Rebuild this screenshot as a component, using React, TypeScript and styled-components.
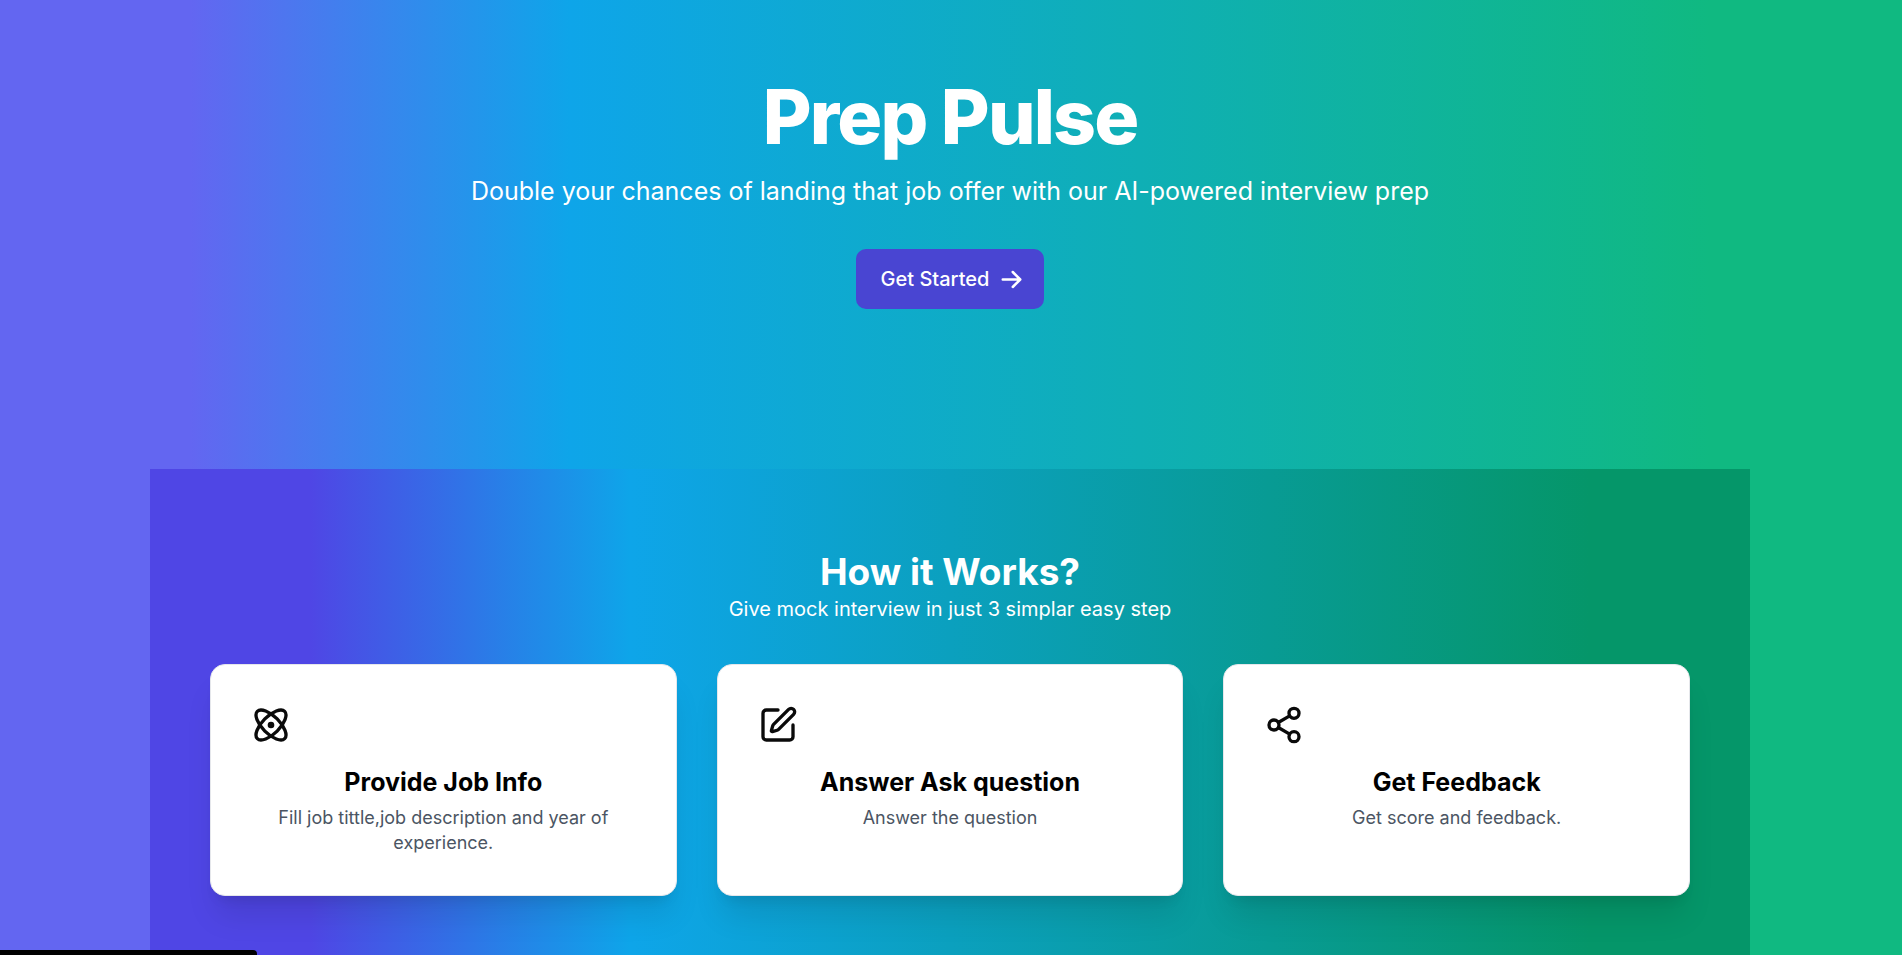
import React from "react";
import styled, { createGlobalStyle } from "styled-components";
import { Atom, Edit, Share2 } from "lucide-react";

const GlobalStyle = createGlobalStyle`
  *, *::before, *::after { box-sizing: border-box; }
  html, body { margin: 0; height: 100%; }
  body {
    font-family: Inter, "Liberation Sans", sans-serif;
    overflow: hidden;
    color: #000;
    border-right: 2px solid #10b981;
  }
  h1, h2, h3, p { margin: 0; }
`;

const Page = styled.div`
  min-height: 100vh;
  background: linear-gradient(to right, #6366f1 10%, #0ea5e9 30%, #10b981 90%);
`;

const Hero = styled.section`
  display: flex;
  flex-direction: column;
  align-items: center;
  padding: 80px 48px 160px;
  text-align: center;
  color: #fff;
`;

const Title = styled.h1`
  font-size: 75px;
  line-height: 73px;
  font-weight: 800;
  letter-spacing: -0.025em;
`;

const Tagline = styled.p`
  margin-top: 20px;
  font-size: 25px;
  line-height: 36px;
`;

const StartButton = styled.button`
  display: inline-flex;
  align-items: center;
  gap: 10px;
  margin-top: 40px;
  padding: 16px 20px 16px 25px;
  border: 0;
  border-radius: 10px;
  background: #4945d2;
  color: #fff;
  font: 500 20px/28px Inter, "Liberation Sans", sans-serif;
`;

const Works = styled.section`
  max-width: 1600px;
  margin: 0 auto;
  padding: 80px 60px;
  background: linear-gradient(to right, #4f46e5 10%, #0ea5e9 30%, #059669 90%);
  text-align: center;
`;

const WorksTitle = styled.h2`
  color: #fff;
  font-size: 37px;
  line-height: 45px;
  font-weight: 700;
`;

const WorksText = styled.p`
  color: #fff;
  font-size: 20px;
  line-height: 30px;
`;

const Cards = styled.div`
  display: grid;
  grid-template-columns: repeat(3, 1fr);
  gap: 40px;
  margin-top: 40px;
`;

const Card = styled.article`
  padding: 40px;
  border: 1px solid #e5e7eb;
  border-radius: 15px;
  background: #fff;
  box-shadow: 0 25px 31px -6px rgb(0 0 0 / 0.1), 0 10px 13px -8px rgb(0 0 0 / 0.1);
`;

const IconRow = styled.div`
  display: flex;
  color: #0a0a0a;
`;

const CardTitle = styled.h3`
  margin-top: 20px;
  font-size: 25px;
  line-height: 35px;
  font-weight: 700;
`;

const CardText = styled.p`
  margin-top: 5px;
  color: #4b5563;
  font-size: 18px;
  line-height: 25px;
`;

const StatusBar = styled.div`
  position: fixed;
  left: 0;
  bottom: 0;
  width: 257px;
  height: 5px;
  border-top-right-radius: 4px;
  background: #000;
`;

const ArrowIcon = () => (
  <svg width="25" height="25" viewBox="0 0 20 20" fill="currentColor" aria-hidden="true">
    <path
      fillRule="evenodd"
      clipRule="evenodd"
      d="M10.293 3.293a1 1 0 011.414 0l6 6a1 1 0 010 1.414l-6 6a1 1 0 01-1.414-1.414L14.586 11H3a1 1 0 110-2h11.586l-4.293-4.293a1 1 0 010-1.414z"
    />
  </svg>
);

const steps = [
  { Icon: Atom, title: "Provide Job Info", text: "Fill job tittle,job description and year of experience." },
  { Icon: Edit, title: "Answer Ask question", text: "Answer the question" },
  { Icon: Share2, title: "Get Feedback", text: "Get score and feedback." },
];

export default function App() {
  return (
    <Page>
      <GlobalStyle />
      <Hero>
        <Title>Prep Pulse</Title>
        <Tagline>Double your chances of landing that job offer with our AI-powered interview prep</Tagline>
        <StartButton type="button">
          Get Started
          <ArrowIcon />
        </StartButton>
      </Hero>
      <Works>
        <WorksTitle>How it Works?</WorksTitle>
        <WorksText>Give mock interview in just 3 simplar easy step</WorksText>
        <Cards>
          {steps.map(({ Icon, title, text }) => (
            <Card key={title}>
              <IconRow><Icon size={40} /></IconRow>
              <CardTitle>{title}</CardTitle>
              <CardText>{text}</CardText>
            </Card>
          ))}
        </Cards>
      </Works>
      <StatusBar />
    </Page>
  );
}
